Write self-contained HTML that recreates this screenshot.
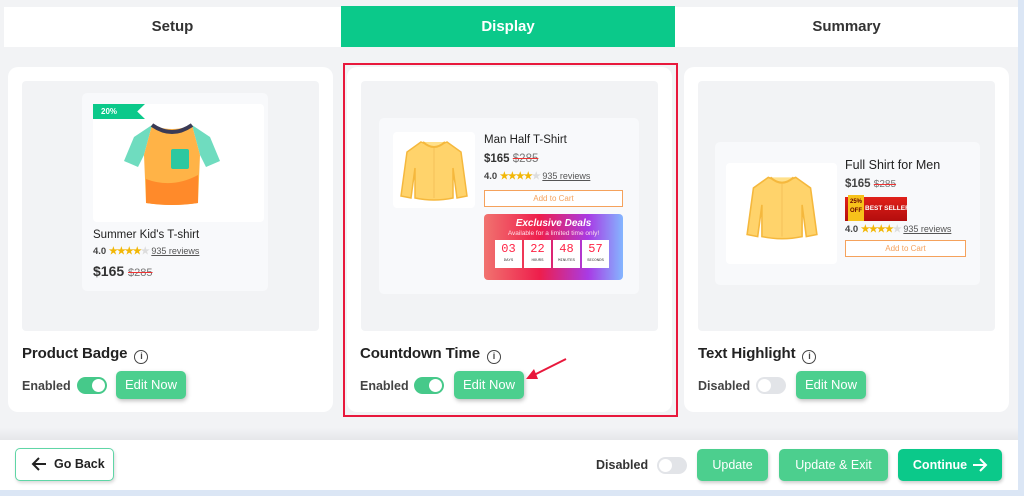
<!DOCTYPE html>
<html><head><style>
*{box-sizing:border-box;margin:0;padding:0}
body{width:1024px;height:496px;background:#f2f3f5;font-family:"Liberation Sans",sans-serif;position:relative;overflow:hidden;color:#222}
.abs{position:absolute}
.tabs{left:4px;top:7px;width:1014px;height:40px;background:#fff}
.tab{position:absolute;top:0;height:40px;line-height:40px;text-align:center;font-weight:bold;font-size:15px;color:#333}
.card{top:67px;width:325px;height:345px;background:#fff;border-radius:10px}
.prev{position:absolute;left:14px;top:14px;width:297px;height:250px;background:#f2f3f5;border-radius:4px}
.title{position:absolute;left:14px;top:278px;font-size:15px;font-weight:bold;color:#222;letter-spacing:-0.1px}
.info{display:inline-block;width:14px;height:14px;border:1.5px solid #444;border-radius:50%;font-size:9px;text-align:center;line-height:11px;vertical-align:-1px;margin-left:7px;font-weight:bold;color:#444}
.lbl{position:absolute;left:14px;top:312px;font-size:12.5px;font-weight:bold;color:#444}
.tg{position:absolute;top:310px;width:30px;height:17px;border-radius:9px;background:#46c98a}
.tg::after{content:"";position:absolute;right:2px;top:2px;width:13px;height:13px;border-radius:50%;background:#fff}
.tg.off{background:#e2e4e8}.tg.off::after{left:2px;right:auto}
.edit{position:absolute;top:304px;width:70px;height:28px;border-radius:5px;background:#4ccf8e;color:#fff;font-size:13px;text-align:center;line-height:28px;box-shadow:1px 2px 4px rgba(0,0,0,.25)}
.pc{position:absolute;background:#f8f9fb;border-radius:5px}
.star{color:#f2b705;font-size:10px;letter-spacing:-1px}
.star i{color:#ddd;font-style:normal}
.rev{color:#555;text-decoration:underline;font-size:9px}
.old{color:#777;text-decoration:line-through;text-decoration-color:#e33;font-weight:normal}
.cart{position:absolute;border:1.3px solid #f5a25c;color:#f5a25c;font-size:8px;text-align:center;background:#fff}
.btn{position:absolute;top:449px;height:32px;border-radius:5px;color:#fff;font-size:12.5px;text-align:center;line-height:32px;box-shadow:1px 2px 3px rgba(0,0,0,.2)}
</style></head><body>
<div class="abs" style="left:1018px;top:0;width:6px;height:496px;background:#dbe6f5"></div>
<div class="abs tabs">
 <div class="tab" style="left:0;width:337px">Setup</div>
 <div class="tab" style="left:337px;top:-1px;height:41px;line-height:42px;width:334px;background:#0bc98a;color:#fff">Display</div>
 <div class="tab" style="left:671px;width:343px">Summary</div>
</div>

<!-- card 1 -->
<div class="abs card" style="left:8px">
 <div class="prev">
  <div class="pc" style="left:60px;top:12px;width:186px;height:198px">
   <div class="abs" style="left:11px;top:11px;width:171px;height:118px;background:#fff;border-radius:4px"></div>
   <div class="abs" style="left:11px;top:11px;width:52px;height:15px;background:#0bc98a;clip-path:polygon(0 0,100% 0,85% 50%,100% 100%,0 100%);color:#fff;font-size:8px;font-weight:bold;line-height:15px;padding-left:8px">20%</div>
   <svg class="abs" style="left:40px;top:26px" width="100" height="88" viewBox="0 0 100 88">
    <path d="M30 6 L12 18 L2 42 L16 48 L22 36 Z" fill="#6fdcbf"/>
    <path d="M70 6 L88 18 L98 42 L84 48 L78 36 Z" fill="#6fdcbf"/>
    <path d="M30 6 Q50 14 70 6 L78 36 L76 84 Q50 88 24 84 L22 36 Z" fill="#ffb347"/>
    <path d="M24 60 Q50 70 76 56 L76 84 Q50 88 24 84 Z" fill="#ff8a2a"/>
    <path d="M30 6 Q50 20 70 6" stroke="#3a3a55" stroke-width="4" fill="none"/>
    <rect x="49" y="30" width="18" height="20" rx="2" fill="#2cc8a0"/>
   </svg>
   <div class="abs" style="left:11px;top:136px;font-size:11.5px">Summer Kid's T-shirt</div>
   <div class="abs" style="left:11px;top:153px;font-size:9.5px;font-weight:bold;color:#444">4.0 <span class="star">★★★★<i>★</i></span> <span class="rev" style="font-weight:normal">935 reviews</span></div>
   <div class="abs" style="left:11px;top:170px;font-size:14px;font-weight:bold;color:#333">$165 <span class="old" style="font-size:11px">$285</span></div>
  </div>
 </div>
 <div class="title">Product Badge<span class="info">i</span></div>
 <div class="lbl">Enabled</div>
 <div class="tg" style="left:69px"></div>
 <div class="edit" style="left:108px">Edit Now</div>
</div>

<!-- card 2 -->
<div class="abs" style="left:343px;top:63px;width:335px;height:354px;border:2px solid #e8183c"></div>
<div class="abs card" style="left:347px">
 <div class="prev">
  <div class="pc" style="left:18px;top:37px;width:260px;height:176px">
   <div class="abs" style="left:14px;top:14px;width:82px;height:76px;background:#fff;border-radius:4px"></div>
   <svg class="abs" style="left:20px;top:20px" width="70" height="64" viewBox="0 0 70 64">
    <path d="M22 4 L8 14 L2 58 L12 60 L16 30 L16 60 Q35 64 54 60 L54 30 L58 60 L68 58 L62 14 L48 4 Q35 10 22 4Z" fill="#ffd36b" stroke="#f5b83d" stroke-width="1.5"/>
    <path d="M24 4 Q35 14 46 4" stroke="#f5b83d" stroke-width="2" fill="#ffe08a"/>
    <line x1="35" y1="10" x2="35" y2="60" stroke="#f5c25a"/>
   </svg>
   <div class="abs" style="left:105px;top:16px;font-size:11.5px">Man Half T-Shirt</div>
   <div class="abs" style="left:105px;top:35px;font-size:11.5px;font-weight:bold;color:#333">$165 <span class="old">$285</span></div>
   <div class="abs" style="left:105px;top:53px;font-size:9.5px;font-weight:bold;color:#444">4.0 <span class="star">★★★★<i>★</i></span> <span class="rev" style="font-weight:normal">935 reviews</span></div>
   <div class="cart" style="left:105px;top:72px;width:139px;height:17px;line-height:15px">Add to Cart</div>
   <div class="abs" style="left:105px;top:96px;width:139px;height:66px;border-radius:4px;background:linear-gradient(90deg,#f1736f,#ee1e4c 40%,#a83be5 75%,#84b6ff)">
    <div style="text-align:center;color:#fff;font-weight:bold;font-style:italic;font-size:10px;margin-top:4px">Exclusive Deals</div>
    <div style="text-align:center;color:#ffe0ea;font-size:6.5px;margin-top:1px">Available for a limited time only!</div>
    <div style="display:flex;gap:2px;margin:3px 0 0 11px">
     <div style="width:27px;height:28px;background:#fff;text-align:center;color:#f24;font-family:'Liberation Mono';font-size:12px;line-height:18px">03<div style="font-size:4px;color:#333;line-height:6px">DAYS</div></div>
     <div style="width:27px;height:28px;background:#fff;text-align:center;color:#f24;font-family:'Liberation Mono';font-size:12px;line-height:18px">22<div style="font-size:4px;color:#333;line-height:6px">HOURS</div></div>
     <div style="width:27px;height:28px;background:#fff;text-align:center;color:#f24;font-family:'Liberation Mono';font-size:12px;line-height:18px">48<div style="font-size:4px;color:#333;line-height:6px">MINUTES</div></div>
     <div style="width:27px;height:28px;background:#fff;text-align:center;color:#f24;font-family:'Liberation Mono';font-size:12px;line-height:18px">57<div style="font-size:4px;color:#333;line-height:6px">SECONDS</div></div>
    </div>
   </div>
  </div>
 </div>
 <div class="title" style="left:13px">Countdown Time<span class="info">i</span></div>
 <div class="lbl" style="left:13px">Enabled</div>
 <div class="tg" style="left:67px"></div>
 <div class="edit" style="left:107px">Edit Now</div>
 <svg class="abs" style="left:175px;top:290px" width="50" height="30"><path d="M44 2 L8 20" stroke="#e8183c" stroke-width="2"/><path d="M4 22 L12 12 L16 22Z" fill="#e8183c"/></svg>
</div>

<!-- card 3 -->
<div class="abs card" style="left:684px">
 <div class="prev">
  <div class="pc" style="left:17px;top:61px;width:265px;height:143px">
   <div class="abs" style="left:11px;top:21px;width:111px;height:101px;background:#fff;border-radius:4px"></div>
   <svg class="abs" style="left:30px;top:31px" width="74" height="68" viewBox="0 0 70 64">
    <path d="M22 4 L8 14 L2 58 L12 60 L16 30 L16 60 Q35 64 54 60 L54 30 L58 60 L68 58 L62 14 L48 4 Q35 10 22 4Z" fill="#ffd36b" stroke="#f5b83d" stroke-width="1.5"/>
    <path d="M24 4 Q35 14 46 4" stroke="#f5b83d" stroke-width="2" fill="#ffe08a"/>
    <line x1="35" y1="10" x2="35" y2="60" stroke="#f5c25a"/>
   </svg>
   <div class="abs" style="left:130px;top:16px;font-size:12.5px">Full Shirt for Men</div>
   <div class="abs" style="left:130px;top:36px;font-size:11.5px;font-weight:bold;color:#444">$165 <span class="old" style="font-size:10px">$285</span></div>
   <div class="abs" style="left:130px;top:55px;width:62px;height:24px;background:linear-gradient(#e0201a,#b30d0d);font-size:6.5px;font-weight:bold;color:#fff;line-height:24px;padding-left:20px;white-space:nowrap;overflow:hidden">BEST SELLER</div>
   <div class="abs" style="left:133px;top:53px;width:16px;height:26px;background:#f7c21b;font-size:6px;font-weight:bold;color:#600;text-align:center;line-height:9px;padding-top:3px">25%<br>OFF</div>
   <div class="abs" style="left:130px;top:82px;font-size:9.5px;font-weight:bold;color:#444">4.0 <span class="star">★★★★<i>★</i></span> <span class="rev" style="font-weight:normal">935 reviews</span></div>
   <div class="cart" style="left:130px;top:98px;width:121px;height:17px;line-height:15px">Add to Cart</div>
  </div>
 </div>
 <div class="title">Text Highlight<span class="info">i</span></div>
 <div class="lbl">Disabled</div>
 <div class="tg off" style="left:72px"></div>
 <div class="edit" style="left:112px">Edit Now</div>
</div>

<!-- bottom -->
<div class="abs" style="left:0;top:428px;width:1018px;height:12px;background:linear-gradient(#f2f3f5,#e6e7ea)"></div>
<div class="abs" style="left:0;top:440px;width:1018px;height:50px;background:#fff"></div>
<div class="abs" style="left:0;top:490px;width:1024px;height:6px;background:#dbe6f5"></div>
<div class="abs" style="left:15px;top:448px;width:99px;height:33px;border:1.5px solid #5fd6a6;border-radius:5px;background:#fff;font-size:12.5px;font-weight:bold;line-height:30px;padding-left:38px;box-shadow:1px 2px 3px rgba(0,0,0,.15)">Go Back
 <svg class="abs" style="left:15px;top:8px" width="16" height="14"><path d="M15 7H2M8 1L2 7L8 13" stroke="#222" stroke-width="2" fill="none"/></svg></div>
<div class="abs" style="left:596px;top:458px;font-size:12.5px;font-weight:bold;color:#333">Disabled</div>
<div class="tg off" style="left:657px;top:457px"></div>
<div class="btn" style="left:697px;width:71px;background:#4ccf8e">Update</div>
<div class="btn" style="left:779px;width:109px;background:#4ccf8e">Update &amp; Exit</div>
<div class="btn" style="left:898px;width:104px;background:#0bc98a;font-weight:bold;padding-right:20px">Continue
 <svg class="abs" style="left:74px;top:9px" width="16" height="14"><path d="M1 7H14M8 1L14 7L8 13" stroke="#fff" stroke-width="2" fill="none"/></svg></div>
</body></html>
